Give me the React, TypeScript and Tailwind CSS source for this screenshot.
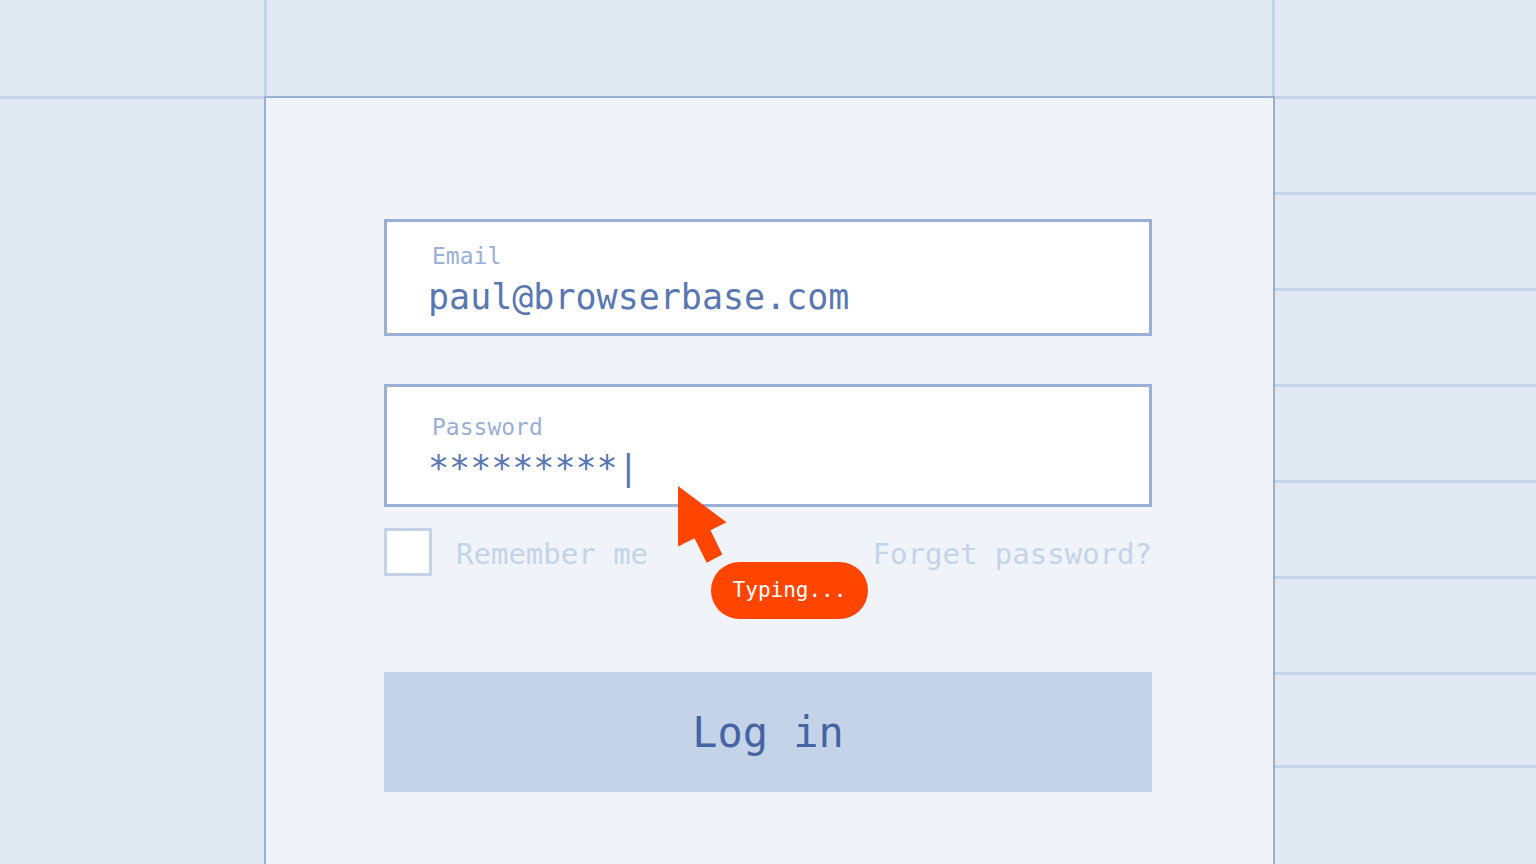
import { useState } from "react";

const ROWS = ["h-24", "h-24", "h-24", "h-24", "h-24", "h-24", "h-[93px]"];

type FieldProps = {
  id: string;
  label: string;
  value: string;
  onChange: (value: string) => void;
  className: string;
};

function Field({ id, label, value, onChange, className }: FieldProps) {
  return (
    <div className={`flex flex-col gap-[7px] border-[3px] border-[#9aafd5] bg-white pb-4 ${className}`}>
      <label htmlFor={id} className="pl-[45px] text-[23px] leading-7 text-[#9aafd5]">
        {label}
      </label>
      <input
        id={id}
        type="text"
        autoComplete="off"
        spellCheck={false}
        value={value}
        onChange={(e) => onChange(e.target.value)}
        className="h-10 w-full bg-transparent pr-6 pl-[41px] text-[35px] leading-10 text-[#5977b1] outline-none"
      />
    </div>
  );
}

function TypingCursor() {
  return (
    <div className="pointer-events-none absolute top-[102px] left-[294px]">
      <svg width="49" height="77" viewBox="0 0 49 77" fill="#ff4500" aria-hidden="true" className="block">
        <path d="M0 0 48.5 36.3 32.5 44.3 44.3 68.5 28.7 76.7 16.5 52.3 0 60.5Z" />
      </svg>
      <div className="-mt-px ml-[33px] flex h-[57px] w-[157px] items-center justify-center rounded-full bg-[#ff4500] pb-0.5 text-[21px] leading-7 text-white">
        Typing...
      </div>
    </div>
  );
}

export default function App() {
  const [email, setEmail] = useState("paul@browserbase.com");
  const [password, setPassword] = useState("*********|");

  return (
    <div className="grid min-h-screen grid-cols-[264fr_1011fr_261fr] grid-rows-[96px_1fr] bg-[#e1e9f3] font-['DejaVu_Sans_Mono',monospace]">
      <div />
      <div className="border-x-[3px] border-[#c5d3e8]" />
      <div />

      <div className="border-t-[3px] border-[#c5d3e8]" />
      <main className="border-x-2 border-t-2 border-[#9aafd5] bg-[#f0f3f8] pt-[121px] pr-[121px] pb-[72px] pl-[118px]">
        <form onSubmit={(e) => e.preventDefault()}>
          <Field id="email" label="Email" value={email} onChange={setEmail} className="pt-5" />
          <div className="relative mt-12">
            <Field id="password" label="Password" value={password} onChange={setPassword} className="pt-[26px]" />
            <TypingCursor />
          </div>
          <div className="mt-[21px] flex h-12 items-start justify-between text-[29px] leading-[52px] text-[#c5d3e8]">
            <div className="flex items-start gap-6">
              <input
                id="remember"
                type="checkbox"
                className="size-12 appearance-none border-[3px] border-[#c5d3e8] bg-white checked:bg-[#c5d3e8]"
              />
              <label htmlFor="remember">Remember me</label>
            </div>
            <a href="#forgot">Forget password?</a>
          </div>
          <button type="submit" className="mt-24 h-[120px] w-full bg-[#c5d3e8] pt-0.5 text-[42px] leading-[48px] text-[#4564a3]">
            Log in
          </button>
        </form>
      </main>
      <div>
        {ROWS.map((height, i) => (
          <div key={i} className={`border-t-[3px] border-[#c5d3e8] ${height}`} />
        ))}
        <div className="border-t-[3px] border-[#c5d3e8]" />
      </div>
    </div>
  );
}
